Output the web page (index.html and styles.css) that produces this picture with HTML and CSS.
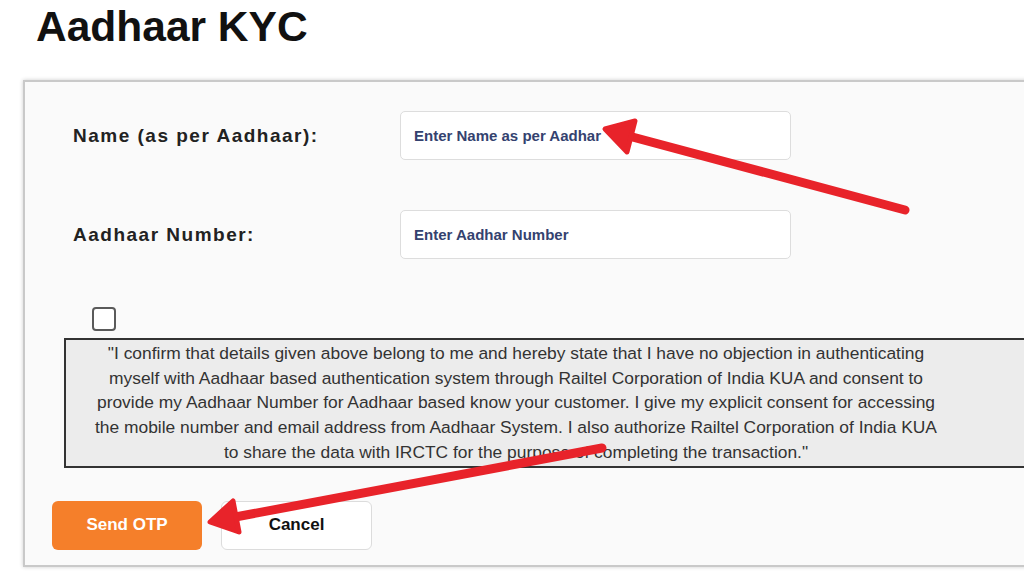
FILE: index.html
```html
<!DOCTYPE html>
<html lang="en">
<head>
    <meta charset="UTF-8">
    <meta name="viewport" content="width=device-width, initial-scale=1.0">
    <title>Aadhaar KYC</title>
    <link rel="stylesheet" href="styles.css">
</head>
<body>
    <h1 class="page-title">Aadhaar KYC</h1>

    <div class="panel">
        <form class="kyc-form">
            <div class="form-grid">
                <label for="aadhaarName" class="field-label">Name (as per Aadhaar):</label>
                <input type="text" id="aadhaarName" class="field-input" placeholder="Enter Name as per Aadhar">

                <label for="aadhaarNumber" class="field-label">Aadhaar Number:</label>
                <input type="text" id="aadhaarNumber" class="field-input" placeholder="Enter Aadhar Number">
            </div>

            <input type="checkbox" id="consent" class="consent-check">
            <div class="consent-box">
                <p class="consent-text">"I confirm that details given above belong to me and hereby state that I have no objection in authenticating myself with Aadhaar based authentication system through Railtel Corporation of India KUA and consent to provide my Aadhaar Number for Aadhaar based know your customer. I give my explicit consent for accessing the mobile number and email address from Aadhaar System. I also authorize Railtel Corporation of India KUA to share the data with IRCTC for the purpose of completing the transaction."</p>
            </div>

            <div class="actions">
                <button type="button" class="btn btn-primary">Send OTP</button>
                <button type="button" class="btn btn-plain">Cancel</button>
            </div>
        </form>
    </div>

    <!-- annotation arrows drawn over the screenshot -->
    <svg class="annotations" width="1024" height="576" viewBox="0 0 1024 576">
        <g stroke="#e8232a" fill="#e8232a" stroke-linecap="round" stroke-linejoin="round">
            <line x1="905" y1="210" x2="625" y2="135" stroke-width="9"/>
            <polygon points="605,129 635,121 627,152" stroke-width="5"/>
            <line x1="602" y1="448" x2="230" y2="518" stroke-width="9"/>
            <polygon points="210,522 233,501 239,532" stroke-width="5"/>
        </g>
    </svg>
</body>
</html>
```

FILE: styles.css
```css
body {
    font-family: "Liberation Sans", Arial, sans-serif;
    margin: 0;
    padding: 0;
    background-color: #ffffff;
    overflow: hidden;
    position: relative;
    height: 576px;
}

.page-title {
    margin: 5px 0 0 36px;
    font-size: 42.5px;
    line-height: 43px;
    font-weight: bold;
    color: #111111;
}

.panel {
    margin: 32px 0 0 23px;
    width: 1060px;
    height: 483px;
    background-color: #fafafa;
    border: 2px solid #c9c9c9;
    box-shadow: 0 0 4px rgba(0, 0, 0, 0.2);
}

.kyc-form {
    padding-top: 29px;
}

.form-grid {
    display: grid;
    grid-template-columns: 327px 391px;
    row-gap: 50px;
    align-items: center;
    padding-left: 48px;
}

.field-label {
    font-size: 19px;
    font-weight: bold;
    letter-spacing: 1.5px;
    color: #222222;
}

.field-input {
    box-sizing: border-box;
    height: 49px;
    padding: 0 13px;
    border: 1px solid #dddddd;
    border-radius: 5px;
    background-color: #ffffff;
    font-family: "Liberation Sans", Arial, sans-serif;
    font-size: 15px;
    font-weight: bold;
}

.field-input::placeholder {
    color: #34426f;
    opacity: 1;
}

.consent-check {
    appearance: none;
    display: block;
    box-sizing: border-box;
    width: 24px;
    height: 24px;
    margin: 48px 0 0 67px;
    border: 2px solid #5a5a5a;
    border-radius: 4px;
    background-color: #ffffff;
}

.consent-box {
    margin: 7px 0 0 39px;
    padding: 1px 0 1px 24px;
    border: 2px solid #333333;
    background-color: #ececec;
}

.consent-text {
    width: 852px;
    margin: 0;
    text-align: center;
    font-size: 17.4px;
    line-height: 24.7px;
    color: #333333;
}

.actions {
    display: flex;
    gap: 19px;
    margin: 33px 0 0 27px;
}

.btn {
    width: 150px;
    height: 49px;
    border-radius: 6px;
    font-family: "Liberation Sans", Arial, sans-serif;
    font-size: 17px;
    font-weight: bold;
    cursor: pointer;
}

.btn-primary {
    background-color: #f57f2a;
    color: #ffffff;
    border: none;
}

.btn-plain {
    width: 151px;
    background-color: #ffffff;
    color: #111111;
    border: 1px solid #dcdcdc;
}

.annotations {
    position: absolute;
    top: 0;
    left: 0;
    pointer-events: none;
}
```
